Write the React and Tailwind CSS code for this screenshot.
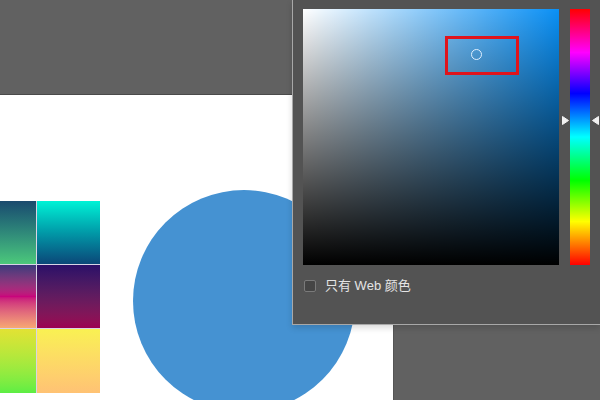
import React from 'react';

const swatches = [
  'from-[#1b4a6e] to-[#4cc97a]',
  'from-[#00f3d6] to-[#0b4778]',
  'from-[#3a3a7c] via-[#c8047c] to-[#f7a872]',
  'from-[#2c0e68] to-[#9c0052]',
  'from-[#e2e234] to-[#5cee44]',
  'from-[#f9f152] to-[#ffc274]',
];

const ColorPanel = () => {
  return (
    <div className="absolute right-0 top-0 w-[308px] h-[325px] bg-[#535353] border-l border-b border-[#a8a8a8] pl-[10px] pt-[9px] shadow-[0_3px_6px_rgba(0,0,0,0.15)]">
      <div className="flex">
        {/* saturation / brightness field */}
        <div className="relative w-[256px] h-[256px] bg-[#0a90f5]">
          <div className="absolute inset-0 bg-linear-to-r from-white to-transparent"></div>
          <div className="absolute inset-0 bg-linear-to-b from-transparent to-black"></div>
          <div className="absolute left-[142px] top-[27px] w-[74px] h-[39px] border-[3px] border-[#e0141c]"></div>
          <div className="absolute left-[168px] top-[40px] w-[11px] h-[11px] rounded-full border border-[#dfefff]"></div>
        </div>

        {/* hue strip */}
        <div className="relative ml-[11px] w-[20px] h-[256px] bg-[linear-gradient(to_bottom,#ff0000,#ff00ff_17%,#0000ff_33%,#00ffff_50%,#00ff00_67%,#ffff00_83%,#ff0000)]">
          <svg className="absolute left-[-8px] top-[107px]" width="7" height="9" viewBox="0 0 7 9">
            <path d="M0.5 0.5 L6.5 4.5 L0.5 8.5 Z" fill="#f2f2f2" strokeLinejoin="round" stroke="#f2f2f2" />
          </svg>
          <svg className="absolute right-[-9px] top-[107px]" width="7" height="9" viewBox="0 0 7 9">
            <path d="M6.5 0.5 L0.5 4.5 L6.5 8.5 Z" fill="#f2f2f2" strokeLinejoin="round" stroke="#f2f2f2" />
          </svg>
        </div>
      </div>

      <div className="flex items-center mt-[14px] ml-[1px]">
        <div className="w-[12px] h-[12px] rounded-[2px] bg-[#454545] border border-[#7a7a7a]"></div>
        <span
          className="ml-[9px] text-[13px] text-[#e4e4e4] leading-none"
          style={{ fontFamily: '"Liberation Sans", "Noto Sans CJK SC", sans-serif' }}
        >
          只有 Web 颜色
        </span>
      </div>
    </div>
  );
};

export default function App() {
  return (
    <div className="relative w-[600px] h-[400px] overflow-hidden bg-[#616161]">
      <div className="h-[95px] border-b border-[#4a4a4a]"></div>
      <div className="flex">
        <div className="relative w-[394px] h-[305px] bg-white overflow-hidden border-r border-[#555]">
          <div className="absolute left-[-27px] top-[106px] grid grid-cols-[63px_63px] grid-rows-[63px_63px_64px] gap-px bg-[#d8d4e6]">
            {swatches.map((c, i) => (
              <div key={i} className={`bg-linear-to-b ${c}`}></div>
            ))}
          </div>
          <div className="absolute left-[133px] top-[95px] w-[222px] h-[222px] rounded-full bg-[#4592d2]"></div>
        </div>
      </div>
      <ColorPanel />
    </div>
  );
}
